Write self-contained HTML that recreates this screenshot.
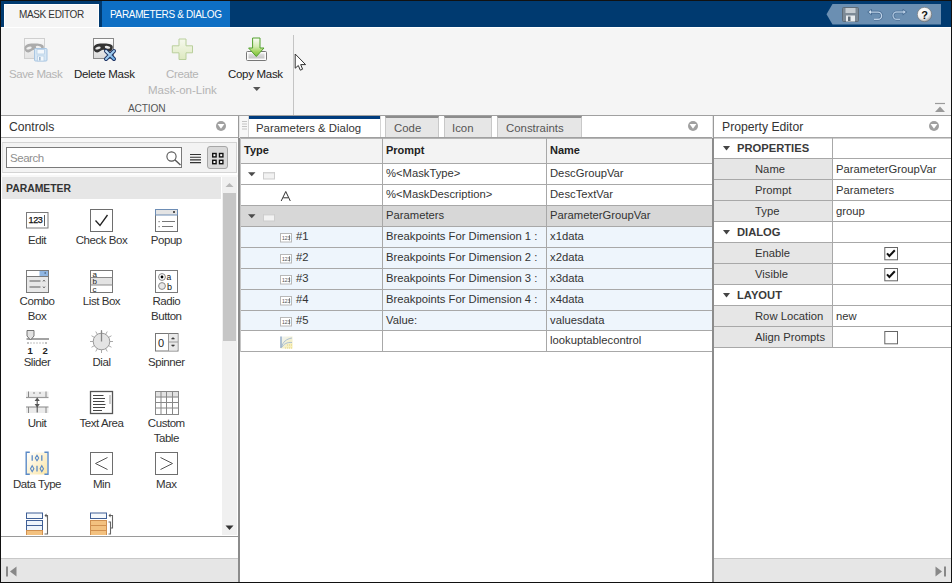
<!DOCTYPE html>
<html><head><meta charset="utf-8">
<style>
*{box-sizing:border-box;margin:0;padding:0}
html,body{width:952px;height:583px;overflow:hidden;background:#f5f5f5;font-family:"Liberation Sans",sans-serif;color:#222}
.a{position:absolute}
.t{position:absolute;white-space:nowrap;line-height:1}
</style></head><body>
<div class="a" style="left:0;top:0;width:952px;height:583px;overflow:hidden">

<!-- top strip -->
<div class="a" style="left:0;top:0;width:952px;height:1px;background:#111"></div>
<div class="a" style="left:0;top:1px;width:952px;height:26px;background:#003a70"></div>
<div class="a" style="left:0;top:27px;width:952px;height:1px;background:#fff"></div>
<!-- tab mask editor -->
<div class="a" style="left:4px;top:4px;width:95px;height:23px;background:#f5f5f5;border-top:1px solid #fff;border-right:1px solid #fff;border-left:1px solid #fff"></div>
<div class="t" style="left:19px;top:10px;font-size:10px;letter-spacing:-0.35px;color:#333">MASK EDITOR</div>
<!-- tab parameters -->
<div class="a" style="left:102px;top:1px;width:128px;height:26px;background:#0e6fc4"></div>
<div class="t" style="left:110px;top:10px;font-size:10px;letter-spacing:-0.34px;color:#fff">PARAMETERS &amp; DIALOG</div>

<!-- toolbar -->
<div class="a" style="left:0;top:28px;width:952px;height:87px;background:#f5f5f5"></div>
<div class="a" style="left:0;top:115px;width:952px;height:1px;background:#a0a0a0"></div>
<div class="a" style="left:293px;top:35px;width:1px;height:80px;background:#c4c4c4"></div>
<div class="t" style="left:9px;top:69px;font-size:11.5px;letter-spacing:-0.4px;color:#b4b4b4">Save Mask</div>
<div class="t" style="left:74px;top:69px;font-size:11.5px;letter-spacing:-0.3px;color:#222">Delete Mask</div>
<div class="t" style="left:166px;top:69px;font-size:11.5px;letter-spacing:-0.35px;color:#b4b4b4">Create</div>
<div class="t" style="left:148px;top:85px;font-size:11.5px;letter-spacing:-0.02px;color:#b4b4b4">Mask-on-Link</div>
<div class="t" style="left:228px;top:69px;font-size:11.5px;letter-spacing:-0.3px;color:#222">Copy Mask</div>
<div class="t" style="left:128px;top:104px;font-size:10.2px;letter-spacing:-0.2px;color:#555">ACTION</div>



<!-- toolbar icons -->
<svg class="a" style="left:23px;top:37px" width="26" height="25" viewBox="0 0 26 25">
 <defs><linearGradient id="gbox1" x1="0" y1="0" x2="0" y2="1"><stop offset="0" stop-color="#f7f7f7"/><stop offset="1" stop-color="#e4e4e4"/></linearGradient></defs>
 <rect x="1.5" y="1.5" width="20" height="20" fill="url(#gbox1)" stroke="#cfcfcf"/>
 <path d="M1.5 11C1.5 7.5 6 6.3 11 6.5C16 6.3 20.8 7 20.8 10C20.8 13.5 18.5 15 16.5 14.5C14.5 14 13 12.8 11 12.8C9 12.8 7.5 15.8 5 15.5C2.5 15.2 1.5 13.5 1.5 11Z" fill="#ababab"/><ellipse cx="6" cy="11" rx="2.8" ry="1.4" transform="rotate(-15 6 11)" fill="#efefef"/><ellipse cx="15.5" cy="10.3" rx="2.8" ry="1.4" transform="rotate(10 15.5 10.3)" fill="#efefef"/>
 <rect x="11.5" y="11.5" width="12.5" height="12.5" rx="1" fill="#d6e6f4" stroke="#a9c6e2"/>
 <rect x="14" y="12.5" width="7.5" height="4.5" fill="#f4f8fc" stroke="#b7cfe6" stroke-width="0.8"/>
 <rect x="14.5" y="19" width="6.5" height="5" fill="#f4f8fc" stroke="#b7cfe6" stroke-width="0.8"/>
 <rect x="16" y="20" width="1.6" height="3.5" fill="#9fb8d0"/>
</svg>
<svg class="a" style="left:92px;top:37px" width="26" height="25" viewBox="0 0 26 25">
 <defs><linearGradient id="gbox2" x1="0" y1="0" x2="0" y2="1"><stop offset="0" stop-color="#ffffff"/><stop offset="1" stop-color="#d9d9d9"/></linearGradient>
 <linearGradient id="gx" x1="0" y1="0" x2="1" y2="1"><stop offset="0" stop-color="#d5ecfb"/><stop offset="1" stop-color="#6aaee6"/></linearGradient></defs>
 <rect x="1.5" y="1.5" width="20" height="20" fill="url(#gbox2)" stroke="#8a8a8a"/>
 <path d="M1.5 11C1.5 7.5 6 6.3 11 6.5C16 6.3 20.8 7 20.8 10C20.8 13.5 18.5 15 16.5 14.5C14.5 14 13 12.8 11 12.8C9 12.8 7.5 15.8 5 15.5C2.5 15.2 1.5 13.5 1.5 11Z" fill="#333"/><ellipse cx="6" cy="11" rx="2.8" ry="1.4" transform="rotate(-15 6 11)" fill="#e9e9e9"/><ellipse cx="15.5" cy="10.3" rx="2.8" ry="1.4" transform="rotate(10 15.5 10.3)" fill="#e9e9e9"/>
 <path d="M14 14L22 22M22 14L14 22" stroke="#1f3566" stroke-width="4" stroke-linecap="round"/>
 <path d="M14 14L22 22M22 14L14 22" stroke="url(#gx)" stroke-width="2" stroke-linecap="round"/>
</svg>
<svg class="a" style="left:171px;top:38px" width="23" height="23" viewBox="0 0 23 23">
 <defs><linearGradient id="gp" x1="0" y1="0" x2="0" y2="1"><stop offset="0" stop-color="#f6f9ee"/><stop offset="1" stop-color="#dde9bf"/></linearGradient></defs>
 <path d="M8 1H15V7.8H21.5V14.8H15V21.5H8V14.8H1.3V7.8H8Z" fill="url(#gp)" stroke="#b9cf9c"/>
</svg>
<svg class="a" style="left:245px;top:37px" width="23" height="25" viewBox="0 0 23 25">
 <defs><linearGradient id="ga" x1="0" y1="0" x2="0" y2="1"><stop offset="0" stop-color="#fbfdf7"/><stop offset="0.45" stop-color="#d5ecb4"/><stop offset="0.75" stop-color="#9fd35a"/><stop offset="1" stop-color="#78b83c"/></linearGradient>
 <linearGradient id="gt" x1="0" y1="0" x2="0" y2="1"><stop offset="0" stop-color="#e2e2e2"/><stop offset="1" stop-color="#c4c4c4"/></linearGradient></defs>
 <rect x="1.5" y="14.5" width="20" height="9" rx="1" fill="#fbfbfb" stroke="#777"/>
 <rect x="3.5" y="16.5" width="16" height="5" fill="url(#gt)"/>
 <path d="M7.6 1H15V11H19L11.3 19.5L3.6 11H7.6Z" fill="url(#ga)" stroke="#52a02c" stroke-width="1"/>
</svg>
<svg class="a" style="left:253px;top:87px" width="8" height="5"><path d="M0 0H7.5L3.75 4Z" fill="#555"/></svg>
<!-- cursor -->
<svg class="a" style="left:294px;top:52px" width="14" height="21" viewBox="0 0 14 21">
 <path d="M1.2 2V16.2L4.3 13.5L6.3 18.2L8.6 17.2L6.7 12.6H11.6Z" fill="#fff" stroke="#333" stroke-width="1" stroke-linejoin="round"/>
</svg>
<svg class="a" style="left:934px;top:102px" width="12" height="11"><path d="M1 1.5H11" stroke="#9a9a9a" stroke-width="1.2"/><path d="M1 10H11L6 4.5Z" fill="#9a9a9a"/></svg>
<!-- quick access -->
<svg class="a" style="left:826px;top:4px" width="116" height="21" viewBox="0 0 116 21">
 <path d="M6.5 0H115V20.5H6.5L0.5 10.25Z" fill="#6b8fb2"/>
</svg>
<svg class="a" style="left:842px;top:7px" width="17" height="15" viewBox="0 0 17 15">
 <rect x="0.5" y="0.5" width="16" height="14" rx="1" fill="#7d8a96" stroke="#5f6c78"/>
 <rect x="3.5" y="1" width="10" height="5" fill="#c5ccd2"/>
 <rect x="4" y="8.5" width="9" height="6" fill="#e8ecef"/>
 <rect x="6" y="9.5" width="2.5" height="4.5" fill="#5f6c78"/>
</svg>
<svg class="a" style="left:867px;top:9px" width="17" height="13" viewBox="0 0 17 13">
 <path d="M3.5 3.1H11A3.6 3.6 0 0 1 11 10.3H7" fill="none" stroke="#46698f" stroke-width="2.6"/>
 <path d="M0.2 3.1L4.8 -0.4V6.6Z" fill="#46698f"/>
 <path d="M3.5 3.1H11A3.6 3.6 0 0 1 11 10.3H7" fill="none" stroke="#bdd2e8" stroke-width="1.4"/>
 <path d="M1.5 3.1L4 1.1V5.1Z" fill="#d4e3f2"/>
</svg>
<svg class="a" style="left:891px;top:9px" width="17" height="13" viewBox="0 0 17 13">
 <path d="M13 3H5.6A3.6 3.6 0 0 0 5.6 10.2H9" fill="none" stroke="#46698f" stroke-width="2.6"/>
 <path d="M16.2 3L11.6 -0.5V6.5Z" fill="#46698f"/>
 <path d="M13 3H5.6A3.6 3.6 0 0 0 5.6 10.2H9" fill="none" stroke="#a9c2dc" stroke-width="1.4"/>
 <path d="M14.8 3L12.4 1.1V4.9Z" fill="#c0d4ea"/>
</svg>
<svg class="a" style="left:917px;top:7px" width="16" height="16" viewBox="0 0 16 16">
 <defs><radialGradient id="gh" cx="0.4" cy="0.3" r="0.7"><stop offset="0" stop-color="#ffffff"/><stop offset="0.7" stop-color="#eeeeee"/><stop offset="1" stop-color="#a8a8a8"/></radialGradient></defs>
 <circle cx="7.5" cy="7.5" r="7.2" fill="url(#gh)" stroke="#6b6b6b" stroke-width="0.6"/>
 <text x="7.6" y="12" font-family="Liberation Sans" font-weight="bold" font-size="11" text-anchor="middle" fill="#111">?</text>
</svg>

<!-- ============ LEFT PANEL ============ -->
<div class="a" style="left:1px;top:116px;width:237px;height:466px;background:#fff"></div>
<div class="t" style="left:9px;top:121px;font-size:12.2px;color:#333">Controls</div>
<div class="a" style="left:1px;top:137px;width:237px;height:1px;background:#a8a8a8"></div>
<div class="a" style="left:1px;top:138px;width:237px;height:39px;background:#f8f8f8"></div>
<div class="a" style="left:2px;top:142px;width:235px;height:31px;background:#f3f3f3;border:1px solid #d4d4d4;border-left-color:#e0e0e0"></div>
<div class="a" style="left:2px;top:173px;width:236px;height:2px;background:#fff"></div>
<div class="a" style="left:237px;top:140px;width:1px;height:35px;background:#fff"></div>
<div class="a" style="left:6px;top:147px;width:176px;height:21px;background:#fff;border:1px solid #7a7a7a"></div>
<div class="t" style="left:10px;top:153px;font-size:11.5px;letter-spacing:-0.45px;color:#8f8f8f">Search</div>
<div class="a" style="left:207px;top:146px;width:21px;height:23px;background:#d9d9d9;border:1px solid #a6a6a6;border-radius:3px"></div>
<!-- PARAMETER header -->
<div class="a" style="left:2px;top:177px;width:219px;height:22px;background:#e6e6e6"></div>
<div class="t" style="left:6px;top:184px;font-size:10.4px;font-weight:bold;color:#333">PARAMETER</div>
<!-- scrollbar -->
<div class="a" style="left:222px;top:177px;width:15px;height:358px;background:#f0f0f0"></div>
<div class="a" style="left:223px;top:193px;width:13px;height:148px;background:#c6c6c6"></div>
<div class="a" style="left:1px;top:536px;width:237px;height:1px;background:#9a9a9a"></div>
<div class="a" style="left:1px;top:558px;width:237px;height:1px;background:#c8c8c8"></div>
<div class="a" style="left:1px;top:559px;width:237px;height:23px;background:#e6e6e6"></div>
<div class="a" style="left:238px;top:116px;width:1px;height:22px;background:#9a9a9a"></div>
<div class="a" style="left:239px;top:116px;width:1px;height:22px;background:#e4e4e4"></div>
<div class="a" style="left:238px;top:138px;width:2px;height:444px;background:#8c8c8c"></div>

<!-- ============ MIDDLE PANEL ============ -->
<div class="a" style="left:240px;top:116px;width:472px;height:466px;background:#fff"></div>
<!-- tabs -->
<div class="a" style="left:240px;top:116px;width:9px;height:21px;background:#f7f7f7;border-right:1px solid #d4d4d4"></div>
<svg class="a" style="left:242px;top:121px" width="5" height="10"><path d="M0 0.5H5M0 3H5M0 5.5H5M0 8H5" stroke="#c4c4c4" stroke-width="1"/></svg>
<div class="a" style="left:380px;top:116px;width:1px;height:21px;background:#d4d4d4"></div>
<div class="a" style="left:249px;top:116px;width:131px;height:3px;background:#003c7e"></div>
<div class="t" style="left:256px;top:123px;font-size:11.4px;color:#333">Parameters &amp; Dialog</div>
<div class="a" style="left:385px;top:116px;width:54px;height:21px;background:#e6e6e6;border-top:2px solid #8c8c8c;border-left:1px solid #c8c8c8;border-right:1px solid #c8c8c8"></div>
<div class="t" style="left:394px;top:123px;font-size:11.4px;color:#555">Code</div>
<div class="a" style="left:444px;top:116px;width:48px;height:21px;background:#e6e6e6;border-top:2px solid #8c8c8c;border-left:1px solid #c8c8c8;border-right:1px solid #c8c8c8"></div>
<div class="t" style="left:452px;top:123px;font-size:11.4px;color:#555">Icon</div>
<div class="a" style="left:497px;top:116px;width:85px;height:21px;background:#e6e6e6;border-top:2px solid #8c8c8c;border-left:1px solid #c8c8c8;border-right:1px solid #c8c8c8"></div>
<div class="t" style="left:506px;top:123px;font-size:11.4px;color:#555">Constraints</div>
<div class="a" style="left:240px;top:137px;width:472px;height:1px;background:#a0a0a0"></div>
<!-- table -->
<!-- TBL -->
<div class="a" style="left:240px;top:138px;width:472px;height:25px;background:#f3f3f3"></div>
<div class="a" style="left:240px;top:138px;width:472px;height:1px;background:#b4b4b4"></div>
<div class="t" style="left:244px;top:145px;font-size:11px;font-weight:bold;color:#222">Type</div>
<div class="t" style="left:386px;top:145px;font-size:11px;font-weight:bold;color:#222">Prompt</div>
<div class="t" style="left:550px;top:145px;font-size:11px;font-weight:bold;color:#222">Name</div>
<div class="a" style="left:240px;top:164px;width:472px;height:20px;background:#fff"></div>
<div class="t" style="left:386px;top:168px;font-size:11.25px;color:#333">%&lt;MaskType&gt;</div>
<div class="t" style="left:550px;top:168px;font-size:11.25px;color:#333">DescGroupVar</div>
<svg class="a" style="left:248px;top:172px" width="8" height="5"><path d="M0 0.2H7.5L3.75 4.2Z" fill="#4a4a4a"/></svg>
<svg class="a" style="left:263px;top:172px" width="12" height="8"><rect x="0.5" y="0.5" width="11" height="6.5" fill="#f2f2f2" stroke="#cdcdcd"/><path d="M1 1.2H11" stroke="#dedede" stroke-width="1"/></svg>
<div class="a" style="left:240px;top:185px;width:472px;height:20px;background:#fff"></div>
<div class="t" style="left:386px;top:189px;font-size:11.25px;color:#333">%&lt;MaskDescription&gt;</div>
<div class="t" style="left:550px;top:189px;font-size:11.25px;color:#333">DescTextVar</div>
<svg class="a" style="left:280px;top:191px" width="12" height="11"><path d="M1.2 10L5.75 0.5L10.3 10M3.2 6.8H8.3" fill="none" stroke="#333" stroke-width="1"/></svg>
<div class="a" style="left:240px;top:206px;width:472px;height:20px;background:#d7d7d7"></div>
<div class="t" style="left:386px;top:210px;font-size:11.25px;color:#333">Parameters</div>
<div class="t" style="left:550px;top:210px;font-size:11.25px;color:#333">ParameterGroupVar</div>
<svg class="a" style="left:248px;top:214px" width="8" height="5"><path d="M0 0.2H7.5L3.75 4.2Z" fill="#4a4a4a"/></svg>
<svg class="a" style="left:263px;top:214px" width="12" height="8"><rect x="0.5" y="0.5" width="11" height="6.5" fill="#f2f2f2" stroke="#cdcdcd"/><path d="M1 1.2H11" stroke="#dedede" stroke-width="1"/></svg>
<div class="a" style="left:240px;top:227px;width:472px;height:20px;background:#eef5fc"></div>
<div class="t" style="left:296px;top:231px;font-size:11.25px;color:#333">#1</div>
<div class="t" style="left:386px;top:231px;font-size:11.25px;color:#333">Breakpoints For Dimension 1 :</div>
<div class="t" style="left:550px;top:231px;font-size:11.25px;color:#333">x1data</div>
<svg class="a" style="left:280px;top:233px" width="12" height="10"><rect x="0.5" y="0.5" width="11" height="8.5" fill="#fff" stroke="#b8b8b8"/><text x="2" y="7" font-size="5" font-family="Liberation Sans" fill="#555">123</text><path d="M9.5 2V7.5" stroke="#555" stroke-width="0.6"/></svg>
<div class="a" style="left:240px;top:248px;width:472px;height:20px;background:#eef5fc"></div>
<div class="t" style="left:296px;top:252px;font-size:11.25px;color:#333">#2</div>
<div class="t" style="left:386px;top:252px;font-size:11.25px;color:#333">Breakpoints For Dimension 2 :</div>
<div class="t" style="left:550px;top:252px;font-size:11.25px;color:#333">x2data</div>
<svg class="a" style="left:280px;top:254px" width="12" height="10"><rect x="0.5" y="0.5" width="11" height="8.5" fill="#fff" stroke="#b8b8b8"/><text x="2" y="7" font-size="5" font-family="Liberation Sans" fill="#555">123</text><path d="M9.5 2V7.5" stroke="#555" stroke-width="0.6"/></svg>
<div class="a" style="left:240px;top:269px;width:472px;height:20px;background:#eef5fc"></div>
<div class="t" style="left:296px;top:273px;font-size:11.25px;color:#333">#3</div>
<div class="t" style="left:386px;top:273px;font-size:11.25px;color:#333">Breakpoints For Dimension 3 :</div>
<div class="t" style="left:550px;top:273px;font-size:11.25px;color:#333">x3data</div>
<svg class="a" style="left:280px;top:275px" width="12" height="10"><rect x="0.5" y="0.5" width="11" height="8.5" fill="#fff" stroke="#b8b8b8"/><text x="2" y="7" font-size="5" font-family="Liberation Sans" fill="#555">123</text><path d="M9.5 2V7.5" stroke="#555" stroke-width="0.6"/></svg>
<div class="a" style="left:240px;top:290px;width:472px;height:20px;background:#eef5fc"></div>
<div class="t" style="left:296px;top:294px;font-size:11.25px;color:#333">#4</div>
<div class="t" style="left:386px;top:294px;font-size:11.25px;color:#333">Breakpoints For Dimension 4 :</div>
<div class="t" style="left:550px;top:294px;font-size:11.25px;color:#333">x4data</div>
<svg class="a" style="left:280px;top:296px" width="12" height="10"><rect x="0.5" y="0.5" width="11" height="8.5" fill="#fff" stroke="#b8b8b8"/><text x="2" y="7" font-size="5" font-family="Liberation Sans" fill="#555">123</text><path d="M9.5 2V7.5" stroke="#555" stroke-width="0.6"/></svg>
<div class="a" style="left:240px;top:311px;width:472px;height:19px;background:#eef5fc"></div>
<div class="t" style="left:296px;top:315px;font-size:11.25px;color:#333">#5</div>
<div class="t" style="left:386px;top:315px;font-size:11.25px;color:#333">Value:</div>
<div class="t" style="left:550px;top:315px;font-size:11.25px;color:#333">valuesdata</div>
<svg class="a" style="left:280px;top:317px" width="12" height="10"><rect x="0.5" y="0.5" width="11" height="8.5" fill="#fff" stroke="#b8b8b8"/><text x="2" y="7" font-size="5" font-family="Liberation Sans" fill="#555">123</text><path d="M9.5 2V7.5" stroke="#555" stroke-width="0.6"/></svg>
<div class="a" style="left:240px;top:331px;width:472px;height:20px;background:#fff"></div>
<div class="t" style="left:550px;top:335px;font-size:11.25px;color:#333">lookuptablecontrol</div>
<svg class="a" style="left:280px;top:336px" width="13" height="13"><defs><linearGradient id="glut" x1="0" y1="0" x2="1" y2="1"><stop offset="0" stop-color="#eef3f8"/><stop offset="1" stop-color="#f8eeb0"/></linearGradient></defs><rect x="0.5" y="0.5" width="12" height="12" fill="url(#glut)"/><path d="M1 0.5V12" stroke="#7f9cc0" stroke-width="1.2"/><path d="M1.5 11C3 6 6 3 12 2M2 11C4 8 7 6 12 6.5" fill="none" stroke="#9ab2cf" stroke-width="0.8"/><path d="M5 12H12M7 9H12" stroke="#e0cc70" stroke-width="0.8" stroke-dasharray="1 1"/></svg>
<div class="a" style="left:240px;top:163px;width:472px;height:1px;background:#a8a8a8"></div>
<div class="a" style="left:240px;top:184px;width:472px;height:1px;background:#a8a8a8"></div>
<div class="a" style="left:240px;top:205px;width:472px;height:1px;background:#a8a8a8"></div>
<div class="a" style="left:240px;top:226px;width:472px;height:1px;background:#a8a8a8"></div>
<div class="a" style="left:240px;top:247px;width:472px;height:1px;background:#a8a8a8"></div>
<div class="a" style="left:240px;top:268px;width:472px;height:1px;background:#a8a8a8"></div>
<div class="a" style="left:240px;top:289px;width:472px;height:1px;background:#a8a8a8"></div>
<div class="a" style="left:240px;top:310px;width:472px;height:1px;background:#a8a8a8"></div>
<div class="a" style="left:240px;top:330px;width:472px;height:1px;background:#a8a8a8"></div>
<div class="a" style="left:240px;top:351px;width:472px;height:1px;background:#a8a8a8"></div>
<div class="a" style="left:382px;top:138px;width:1px;height:213px;background:#a8a8a8"></div>
<div class="a" style="left:546px;top:138px;width:1px;height:213px;background:#a8a8a8"></div>
<div class="a" style="left:240px;top:138px;width:1px;height:214px;background:#c4c4c4"></div>
<!-- /TBL -->
<div class="a" style="left:712px;top:116px;width:1px;height:22px;background:#e4e4e4"></div>
<div class="a" style="left:713px;top:116px;width:1px;height:22px;background:#9a9a9a"></div>
<div class="a" style="left:712px;top:138px;width:2px;height:444px;background:#8c8c8c"></div>

<!-- ============ RIGHT PANEL ============ -->
<div class="a" style="left:714px;top:116px;width:237px;height:466px;background:#fff"></div>
<div class="t" style="left:722px;top:121px;font-size:12.2px;color:#333">Property Editor</div>
<div class="a" style="left:714px;top:137px;width:237px;height:1px;background:#a8a8a8"></div>
<div class="a" style="left:714px;top:138px;width:237px;height:1px;background:#cfcfcf"></div>
<!-- PROPS -->
<svg class="a" style="left:723px;top:146px" width="7" height="5"><path d="M0 0H7L3.5 4.5Z" fill="#444"/></svg>
<div class="t" style="left:737px;top:143px;font-size:11.2px;font-weight:bold;color:#3a3a3a">PROPERTIES</div>
<div class="a" style="left:714px;top:159px;width:118px;height:20px;background:#e6e6e6"></div>
<div class="t" style="left:755px;top:164px;font-size:11.25px;color:#333">Name</div>
<div class="t" style="left:836px;top:164px;font-size:11.25px;color:#333">ParameterGroupVar</div>
<div class="a" style="left:714px;top:180px;width:118px;height:20px;background:#e6e6e6"></div>
<div class="t" style="left:755px;top:185px;font-size:11.25px;color:#333">Prompt</div>
<div class="t" style="left:836px;top:185px;font-size:11.25px;color:#333">Parameters</div>
<div class="a" style="left:714px;top:201px;width:118px;height:20px;background:#e6e6e6"></div>
<div class="t" style="left:755px;top:206px;font-size:11.25px;color:#333">Type</div>
<div class="t" style="left:836px;top:206px;font-size:11.25px;color:#333">group</div>
<svg class="a" style="left:723px;top:230px" width="7" height="5"><path d="M0 0H7L3.5 4.5Z" fill="#444"/></svg>
<div class="t" style="left:737px;top:227px;font-size:11.2px;font-weight:bold;color:#3a3a3a">DIALOG</div>
<div class="a" style="left:714px;top:243px;width:118px;height:20px;background:#e6e6e6"></div>
<div class="t" style="left:755px;top:248px;font-size:11.25px;color:#333">Enable</div>
<svg class="a" style="left:884px;top:247px" width="14" height="14"><rect x="0.8" y="0.5" width="12.7" height="12.3" fill="#fff" stroke="#666"/><path d="M3 6.3L5.4 9L10.8 3.2" fill="none" stroke="#111" stroke-width="2"/></svg>
<div class="a" style="left:714px;top:264px;width:118px;height:20px;background:#e6e6e6"></div>
<div class="t" style="left:755px;top:269px;font-size:11.25px;color:#333">Visible</div>
<svg class="a" style="left:884px;top:268px" width="14" height="14"><rect x="0.8" y="0.5" width="12.7" height="12.3" fill="#fff" stroke="#666"/><path d="M3 6.3L5.4 9L10.8 3.2" fill="none" stroke="#111" stroke-width="2"/></svg>
<svg class="a" style="left:723px;top:293px" width="7" height="5"><path d="M0 0H7L3.5 4.5Z" fill="#444"/></svg>
<div class="t" style="left:737px;top:290px;font-size:11.2px;font-weight:bold;color:#3a3a3a">LAYOUT</div>
<div class="a" style="left:714px;top:306px;width:118px;height:20px;background:#e6e6e6"></div>
<div class="t" style="left:755px;top:311px;font-size:11.25px;color:#333">Row Location</div>
<div class="t" style="left:836px;top:311px;font-size:11.25px;color:#333">new</div>
<div class="a" style="left:714px;top:327px;width:118px;height:20px;background:#e6e6e6"></div>
<div class="t" style="left:755px;top:332px;font-size:11.25px;color:#333">Align Prompts</div>
<svg class="a" style="left:884px;top:331px" width="14" height="14"><rect x="0.8" y="0.5" width="12.7" height="12.3" fill="#fff" stroke="#666"/></svg>
<div class="a" style="left:714px;top:158px;width:237px;height:1px;background:#a8a8a8"></div>
<div class="a" style="left:714px;top:179px;width:237px;height:1px;background:#a8a8a8"></div>
<div class="a" style="left:714px;top:200px;width:237px;height:1px;background:#a8a8a8"></div>
<div class="a" style="left:714px;top:221px;width:237px;height:1px;background:#a8a8a8"></div>
<div class="a" style="left:714px;top:242px;width:237px;height:1px;background:#a8a8a8"></div>
<div class="a" style="left:714px;top:263px;width:237px;height:1px;background:#a8a8a8"></div>
<div class="a" style="left:714px;top:284px;width:237px;height:1px;background:#a8a8a8"></div>
<div class="a" style="left:714px;top:305px;width:237px;height:1px;background:#a8a8a8"></div>
<div class="a" style="left:714px;top:326px;width:237px;height:1px;background:#a8a8a8"></div>
<div class="a" style="left:714px;top:347px;width:237px;height:1px;background:#a8a8a8"></div>
<div class="a" style="left:832px;top:138px;width:1px;height:209px;background:#a8a8a8"></div>
<!-- /PROPS -->
<div class="a" style="left:714px;top:558px;width:237px;height:1px;background:#c8c8c8"></div>
<div class="a" style="left:714px;top:559px;width:237px;height:23px;background:#e6e6e6"></div>

<!-- LEFTICONS -->
<svg class="a" style="left:165px;top:150px" width="17" height="17" viewBox="0 0 17 17"><circle cx="6.5" cy="6.5" r="4.6" fill="none" stroke="#555" stroke-width="1.1"/><path d="M9.8 9.8L15.5 15" stroke="#555" stroke-width="1.4"/></svg>
<svg class="a" style="left:189px;top:153px" width="13" height="11" viewBox="0 0 13 11"><path d="M1 1.5H12M1 4.2H12M1 6.9H12M1 9.6H12" stroke="#333" stroke-width="1.1"/></svg>
<svg class="a" style="left:210px;top:150px" width="15" height="15" viewBox="0 0 15 15"><rect x="2.7" y="3.5" width="3.4" height="3.4" fill="#fff" stroke="#111" stroke-width="1.4"/><rect x="2.7" y="10.3" width="3.4" height="3.4" fill="#fff" stroke="#111" stroke-width="1.4"/><rect x="9.5" y="3.5" width="3.4" height="3.4" fill="#fff" stroke="#111" stroke-width="1.4"/><rect x="9.5" y="10.3" width="3.4" height="3.4" fill="#fff" stroke="#111" stroke-width="1.4"/></svg>
<svg class="a" style="left:225px;top:182px" width="9" height="6" viewBox="0 0 9 6"><path d="M0.5 5H8.5L4.5 1Z" fill="#b8b8b8"/></svg>
<svg class="a" style="left:225px;top:525px" width="9" height="6" viewBox="0 0 9 6"><path d="M0.5 0.5H8.5L4.5 5Z" fill="#333"/></svg>
<svg class="a" style="left:25px;top:211px" width="25" height="19" viewBox="0 0 25 19"><rect x="1.5" y="1.5" width="21.5" height="15.5" fill="#fff" stroke="#7a7a7a"/><text x="3.6" y="12.2" font-family="Liberation Sans" font-size="9" fill="#111" stroke="#111" stroke-width="0.25" letter-spacing="-0.4">123</text><path d="M19.5 4V15" stroke="#333" stroke-width="0.8"/></svg>
<div class="t" style="left:-23px;width:120px;text-align:center;top:235px;font-size:11.5px;letter-spacing:-0.45px;color:#333">Edit</div>
<svg class="a" style="left:89px;top:208px" width="25" height="25" viewBox="0 0 25 25"><rect x="1.5" y="1.5" width="22" height="22" fill="#fff" stroke="#6e6e6e"/><path d="M6.5 12.5L11 17.5L18.5 7" fill="none" stroke="#222" stroke-width="1.3"/></svg>
<div class="t" style="left:41.5px;width:120px;text-align:center;top:235px;font-size:11.5px;letter-spacing:-0.45px;color:#333">Check Box</div>
<svg class="a" style="left:154px;top:208px" width="25" height="25" viewBox="0 0 25 25"><rect x="1.5" y="1.5" width="22" height="22" fill="#fff" stroke="#707070"/><rect x="1.5" y="1.5" width="22" height="5.5" fill="#e4e4e4" stroke="#6d8db5"/><rect x="19" y="3" width="2" height="2" fill="#555"/><path d="M8 13.5H21M8 18.5H19" stroke="#777" stroke-width="1.2"/><rect x="4.5" y="13" width="1.2" height="1.2" fill="#777"/><rect x="4.5" y="18" width="1.2" height="1.2" fill="#777"/></svg>
<div class="t" style="left:106.30000000000001px;width:120px;text-align:center;top:235px;font-size:11.5px;letter-spacing:-0.45px;color:#333">Popup</div>
<svg class="a" style="left:25px;top:269px" width="25" height="25" viewBox="0 0 25 25"><rect x="1.5" y="1.5" width="22" height="22" fill="#e8e8e8" stroke="#7a7a7a"/><rect x="2" y="2" width="13" height="5" fill="#fff"/><rect x="14.5" y="2" width="8.5" height="5" fill="#90b6e2"/><path d="M1.5 7.5H23.5" stroke="#7a7a7a"/><rect x="19.5" y="3.5" width="1.5" height="1" fill="#345"/><path d="M4.5 12H15.5M4.5 18H15.5" stroke="#8a8a8a" stroke-width="1.3"/><path d="M18 12.5L19 11L20 12.5M18 17.5L19 19L20 17.5" stroke="#666" fill="none" stroke-width="0.9"/></svg>
<div class="t" style="left:-23px;width:120px;text-align:center;top:296px;font-size:11.5px;letter-spacing:-0.45px;color:#333">Combo</div>
<div class="t" style="left:-23px;width:120px;text-align:center;top:311px;font-size:11.5px;letter-spacing:-0.45px;color:#333">Box</div>
<svg class="a" style="left:89px;top:269px" width="25" height="25" viewBox="0 0 25 25"><rect x="1.5" y="1.5" width="22" height="22" fill="#fff" stroke="#777"/><rect x="2" y="9" width="21" height="7" fill="#e3e3e3"/><path d="M1.5 8.5H23.5M1.5 16H23.5" stroke="#8a8a8a"/><text x="3.5" y="7.5" font-family="Liberation Sans" font-size="8" fill="#222">a</text><text x="3.5" y="15" font-family="Liberation Sans" font-size="8" fill="#222">b</text><text x="3.5" y="22.5" font-family="Liberation Sans" font-size="8" fill="#222">c</text></svg>
<div class="t" style="left:41.5px;width:120px;text-align:center;top:296px;font-size:11.5px;letter-spacing:-0.45px;color:#333">List Box</div>
<svg class="a" style="left:154px;top:269px" width="25" height="25" viewBox="0 0 25 25"><rect x="1.5" y="1.5" width="22" height="22" fill="#fff" stroke="#7a7a7a"/><circle cx="8" cy="8" r="3.4" fill="#fff" stroke="#888" stroke-width="1"/><circle cx="8" cy="8" r="1.4" fill="#000"/><circle cx="8" cy="17" r="3.4" fill="#e8e8e8" stroke="#888" stroke-width="1"/><text x="12.5" y="10.5" font-family="Liberation Sans" font-size="8.5" fill="#111">a</text><text x="13" y="20.5" font-family="Liberation Sans" font-size="9" fill="#111">b</text></svg>
<div class="t" style="left:106.30000000000001px;width:120px;text-align:center;top:296px;font-size:11.5px;letter-spacing:-0.45px;color:#333">Radio</div>
<div class="t" style="left:106.30000000000001px;width:120px;text-align:center;top:311px;font-size:11.5px;letter-spacing:-0.45px;color:#333">Button</div>
<svg class="a" style="left:25px;top:329px" width="25" height="26" viewBox="0 0 25 26"><path d="M1.5 10H24" stroke="#666" stroke-width="1.2"/><path d="M2 1.5H9V7L5.5 11L2 7Z" fill="#e2e2e2" stroke="#666" stroke-width="0.9"/><path d="M3 13V15M6 13.5V14.5M9 13.5V14.5M12 13.5V14.5M15 13.5V14.5M18 13.5V14.5M21 13V15" stroke="#777" stroke-width="0.9"/><text x="2.6" y="24.5" font-family="Liberation Sans" font-weight="bold" font-size="9.5" fill="#222">1</text><text x="17.5" y="24.5" font-family="Liberation Sans" font-weight="bold" font-size="9.5" fill="#222">2</text></svg>
<div class="t" style="left:-23px;width:120px;text-align:center;top:357px;font-size:11.5px;letter-spacing:-0.45px;color:#333">Slider</div>
<svg class="a" style="left:89px;top:329px" width="25" height="25" viewBox="0 0 25 25"><g stroke="#aaa" stroke-width="1"><path d="M12.5 12.5L24.00 12.50"/><path d="M12.5 12.5L22.46 18.25"/><path d="M12.5 12.5L18.25 22.46"/><path d="M12.5 12.5L12.50 24.00"/><path d="M12.5 12.5L6.75 22.46"/><path d="M12.5 12.5L2.54 18.25"/><path d="M12.5 12.5L1.00 12.50"/><path d="M12.5 12.5L2.54 6.75"/><path d="M12.5 12.5L6.75 2.54"/><path d="M12.5 12.5L12.50 1.00"/><path d="M12.5 12.5L18.25 2.54"/><path d="M12.5 12.5L22.46 6.75"/></g><circle cx="12.5" cy="12.5" r="8.3" fill="#e4e4e4" stroke="#999" stroke-width="1"/><path d="M12.5 12.5V1.5" stroke="#888" stroke-width="1.3"/></svg>
<div class="t" style="left:41.5px;width:120px;text-align:center;top:357px;font-size:11.5px;letter-spacing:-0.45px;color:#333">Dial</div>
<svg class="a" style="left:154px;top:332px" width="25" height="20" viewBox="0 0 25 20"><rect x="1.5" y="1.5" width="22.5" height="17.5" fill="#fff" stroke="#777"/><rect x="14.5" y="2" width="9" height="16.5" fill="#e9e9e9"/><path d="M14.5 1.5V19M14.5 10H24" stroke="#999"/><text x="4" y="15" font-family="Liberation Sans" font-size="11" fill="#222">0</text><path d="M17.5 7L19 5.5L20.5 7Z M17.5 13L19 14.5L20.5 13Z" fill="#333" stroke="#333" stroke-width="0.6"/></svg>
<div class="t" style="left:106.30000000000001px;width:120px;text-align:center;top:357px;font-size:11.5px;letter-spacing:-0.45px;color:#333">Spinner</div>
<svg class="a" style="left:25px;top:390px" width="25" height="24" viewBox="0 0 25 24"><rect x="1" y="1.5" width="22.5" height="6" fill="#ebebeb"/><path d="M1 7.5H23.5" stroke="#999" stroke-width="1.2"/><path d="M3.5 1.5V7M21 1.5V7M9 2V4M15 2V4" stroke="#888"/><rect x="1" y="17" width="22.5" height="6" fill="#ebebeb"/><path d="M1 17H23.5" stroke="#999" stroke-width="1.2"/><path d="M3.5 17V23M21 17V23" stroke="#888"/><path d="M12.2 9V22.5" stroke="#555" stroke-width="1.1"/><path d="M9.6 11L12.2 7.6L14.8 11ZM9.6 14L12.2 17.4L14.8 14Z" fill="#555"/></svg>
<div class="t" style="left:-23px;width:120px;text-align:center;top:418px;font-size:11.5px;letter-spacing:-0.45px;color:#333">Unit</div>
<svg class="a" style="left:89px;top:390px" width="25" height="25" viewBox="0 0 25 25"><rect x="1.5" y="1.5" width="22" height="22" fill="#fff" stroke="#555" stroke-width="1.3"/><path d="M4 5.5H14.5M4 8.5H16M4 11.5H15.5M4 14.5H16.5M4 17.5H16M4 20.5H13" stroke="#444" stroke-width="1.1"/><path d="M21 5V14" stroke="#999" stroke-width="1"/></svg>
<div class="t" style="left:41.5px;width:120px;text-align:center;top:418px;font-size:11.5px;letter-spacing:-0.45px;color:#333">Text Area</div>
<svg class="a" style="left:154px;top:390px" width="26" height="26" viewBox="0 0 26 26"><rect x="2" y="2" width="23" height="5.5" fill="#e2e2e2"/><g stroke="#888" stroke-width="1" fill="none"><rect x="1.5" y="1.5" width="23" height="23"/><path d="M7 1.5V24.5M12.5 1.5V24.5M18.5 1.5V24.5M1.5 7H24.5M1.5 12.5H24.5M1.5 18H24.5"/></g></svg>
<div class="t" style="left:106.30000000000001px;width:120px;text-align:center;top:418px;font-size:11.5px;letter-spacing:-0.45px;color:#333">Custom</div>
<div class="t" style="left:106.30000000000001px;width:120px;text-align:center;top:433px;font-size:11.5px;letter-spacing:-0.45px;color:#333">Table</div>
<svg class="a" style="left:25px;top:451px" width="25" height="25" viewBox="0 0 25 25"><defs><linearGradient id="gdt" x1="0" y1="0" x2="1" y2="1"><stop offset="0" stop-color="#ffffff"/><stop offset="1" stop-color="#fbe6a6"/></linearGradient></defs><rect x="2" y="1.5" width="20" height="22" fill="url(#gdt)"/><path d="M4.8 1.2H1.2V23.3H4.8M19.4 1.2H23V23.3H19.4" fill="none" stroke="#5b8ac6" stroke-width="1.4"/><path d="M7.2 4.2V9.8" stroke="#5b8ac6" stroke-width="1.3"/><path d="M12 4.2L13.7 7.0L12 9.8L10.3 7.0Z" fill="none" stroke="#5b8ac6" stroke-width="1.1"/><path d="M16.8 4.2V9.8" stroke="#5b8ac6" stroke-width="1.3"/><path d="M7.2 14.7L8.9 17.65L7.2 20.6L5.5 17.65Z" fill="none" stroke="#5b8ac6" stroke-width="1.1"/><path d="M12 14.7V20.6" stroke="#5b8ac6" stroke-width="1.3"/><path d="M16.8 14.7L18.5 17.65L16.8 20.6L15.100000000000001 17.65Z" fill="none" stroke="#5b8ac6" stroke-width="1.1"/></svg>
<div class="t" style="left:-23px;width:120px;text-align:center;top:479px;font-size:11.5px;letter-spacing:-0.45px;color:#333">Data Type</div>
<svg class="a" style="left:89px;top:451px" width="25" height="25" viewBox="0 0 25 25"><rect x="1.5" y="1.5" width="22" height="22" fill="#fff" stroke="#6e6e6e"/><path d="M18.5 6.5L6.5 12.5L18.5 18.5" fill="none" stroke="#555" stroke-width="1"/></svg>
<div class="t" style="left:41.5px;width:120px;text-align:center;top:479px;font-size:11.5px;letter-spacing:-0.45px;color:#333">Min</div>
<svg class="a" style="left:154px;top:451px" width="25" height="25" viewBox="0 0 25 25"><rect x="1.5" y="1.5" width="22" height="22" fill="#fff" stroke="#6e6e6e"/><path d="M6.5 6.5L18.5 12.5L6.5 18.5" fill="none" stroke="#555" stroke-width="1"/></svg>
<div class="t" style="left:106.30000000000001px;width:120px;text-align:center;top:479px;font-size:11.5px;letter-spacing:-0.45px;color:#333">Max</div>
<svg class="a" style="left:25px;top:512px" width="25" height="23" viewBox="0 0 25 23"><rect x="1.5" y="1" width="16" height="5.5" fill="#f4f8fc" stroke="#3f5f96" stroke-width="1"/><rect x="1.5" y="8.5" width="16" height="10" fill="#eef4fb" stroke="#3f5f96" stroke-width="1"/><path d="M1.5 13.5H17.5" stroke="#3f5f96"/><rect x="1.5" y="18.5" width="16" height="6" fill="#f3c17f" stroke="#d09050" stroke-width="1"/><path d="M19.5 22H22.5V3.5H20.5" fill="none" stroke="#666" stroke-width="1.1"/><path d="M19.5 3.5L21.5 1.5V5.5Z" fill="#555"/></svg>
<svg class="a" style="left:89px;top:512px" width="26" height="23" viewBox="0 0 26 23"><rect x="1.5" y="1" width="16" height="5.5" fill="#f4f8fc" stroke="#3f5f96" stroke-width="1"/><rect x="1.5" y="8.5" width="16" height="16" fill="#f3c17f" stroke="#d09050" stroke-width="1"/><path d="M1.5 13.5H17.5M1.5 18.5H17.5" stroke="#d09050"/><path d="M19.5 22H21.5V10H19.5M21.5 16H23.5V3.5H20.5" fill="none" stroke="#666" stroke-width="1.1"/><path d="M19.5 3.5L21.5 1.5V5.5Z" fill="#555"/></svg>
<svg class="a" style="left:5px;top:566px" width="13" height="11" viewBox="0 0 13 11"><rect x="1" y="0.5" width="2" height="10" fill="#888"/><path d="M11.5 0.5V10.5L5 5.5Z" fill="#888"/></svg>
<svg class="a" style="left:934px;top:566px" width="13" height="11" viewBox="0 0 13 11"><rect x="10" y="0.5" width="2" height="10" fill="#888"/><path d="M1.5 0.5V10.5L8 5.5Z" fill="#888"/></svg>
<svg class="a" style="left:215px;top:120px" width="12" height="12" viewBox="0 0 12 12"><circle cx="6" cy="6" r="5" fill="#a0a0a0"/><path d="M2.6 4H9.4L6 8.8Z" fill="#fff"/></svg>
<svg class="a" style="left:687px;top:120px" width="12" height="12" viewBox="0 0 12 12"><circle cx="6" cy="6" r="5" fill="#a0a0a0"/><path d="M2.6 4H9.4L6 8.8Z" fill="#fff"/></svg>
<svg class="a" style="left:928px;top:120px" width="12" height="12" viewBox="0 0 12 12"><circle cx="6" cy="6" r="5" fill="#a0a0a0"/><path d="M2.6 4H9.4L6 8.8Z" fill="#fff"/></svg>
<!-- /LEFTICONS -->
<!-- outer borders -->
<div class="a" style="left:0;top:0;width:1px;height:583px;background:#111"></div>
<div class="a" style="left:951px;top:0;width:1px;height:583px;background:#111"></div>
<div class="a" style="left:0;top:582px;width:952px;height:1px;background:#111"></div>
</div>
</body></html>
